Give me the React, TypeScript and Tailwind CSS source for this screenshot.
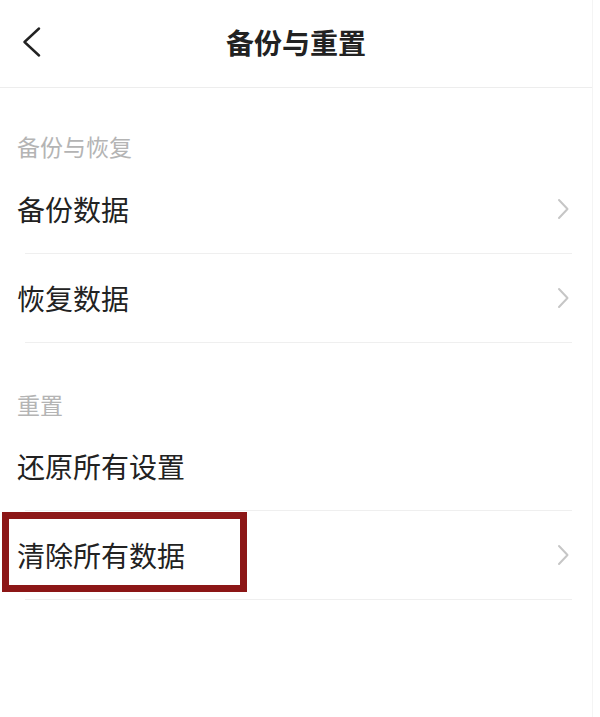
import type { ReactNode } from 'react';

const FONT = "font-['Noto_Sans_CJK_SC','Noto_Sans',sans-serif]";

type Row = { label: string; arrow: boolean; highlight?: boolean };

const BackIcon = () => (
	<svg width="20" height="30" viewBox="0 0 20 30" fill="none" className="block">
		<path d="M18 1.5 L3.5 15 L18 28.5" stroke="#222" strokeWidth="2.4" strokeLinecap="round" strokeLinejoin="round" />
	</svg>
);

const ChevronRight = () => (
	<svg width="14" height="22" viewBox="0 0 14 22" fill="none" className="block">
		<path d="M3 2 L11.5 11 L3 20" stroke="#c6c6c6" strokeWidth="2" strokeLinecap="round" strokeLinejoin="round" />
	</svg>
);

const SectionLabel = ({ children, className }: { children: ReactNode; className: string }) => (
	<div className={`pl-[17px] text-[23px] leading-[23px] text-[#b4b4b4] ${className}`}>{children}</div>
);

const SettingRow = ({ label, arrow, highlight }: Row) => (
	<div className="relative">
		<button className="w-full h-[88px] flex items-center justify-between pl-[17px] pr-[22px] text-left">
			<span className="text-[28px] leading-[28px] text-[#222]">{label}</span>
			{arrow && <ChevronRight />}
		</button>
		<div className="ml-[25px] mr-[20px] h-px bg-[#efefef]" />
		{highlight && (
			<div className="absolute left-[2px] top-[1px] w-[245px] h-[80px] border-[7px] border-[#8c1616] pointer-events-none" />
		)}
	</div>
);

const BACKUP_ROWS: Row[] = [
	{ label: '备份数据', arrow: true },
	{ label: '恢复数据', arrow: true },
];

const RESET_ROWS: Row[] = [
	{ label: '还原所有设置', arrow: false },
	{ label: '清除所有数据', arrow: true, highlight: true },
];

export default function App() {
	return (
		<div className={`w-[600px] h-[717px] bg-white overflow-hidden ${FONT}`}>
			<div className="w-[593px] h-full border-r border-[#f4f4f4]">
				<header className="h-[88px] grid grid-cols-[1fr_auto_1fr] items-center border-b border-[#ededed] pb-1">
					<button className="pl-[21px] justify-self-start">
						<BackIcon />
					</button>
					<h1 className="text-[28px] leading-[28px] font-bold text-[#222]">备份与重置</h1>
					<div />
				</header>

				<SectionLabel className="pt-[47px] pb-[7px]">备份与恢复</SectionLabel>
				{BACKUP_ROWS.map((row) => (
					<SettingRow key={row.label} {...row} />
				))}

				<SectionLabel className="pt-[50px] pb-[6px]">重置</SectionLabel>
				{RESET_ROWS.map((row) => (
					<SettingRow key={row.label} {...row} />
				))}
			</div>
		</div>
	);
}
